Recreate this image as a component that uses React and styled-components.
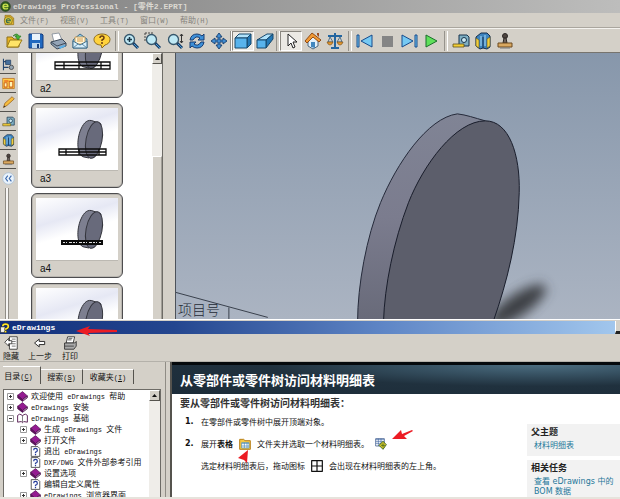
import React from "react";
import styled, { createGlobalStyle, css } from "styled-components";

const face = "#d4d0c8";
const cjk = `"Noto Sans CJK SC", sans-serif`;

const Global = createGlobalStyle`
  * { box-sizing: border-box; }
  body { margin: 0; background: ${face}; }
  button { font: inherit; color: inherit; background: none; border: 0; padding: 0; margin: 0; }
  ul, ol, h1, h2, h3, p { margin: 0; padding: 0; }
  ul, ol { list-style: none; }
  svg { display: block; flex: none; }
`;

const Desktop = styled.div`
  display: grid;
  grid-template-rows: auto auto auto minmax(0, 266fr) minmax(0, 180fr);
  height: 100vh;
  overflow: hidden;
  background: ${face};
  font: 8px/12px ${cjk};
  color: #111;
`;

const Latin = styled.span`
  font-family: "Liberation Mono", monospace;
  font-size: ${(p) => (p.$bold ? 8 : 7)}px;
  font-weight: ${(p) => (p.$bold ? 700 : 400)};
  white-space: pre;
`;

const TitleBar = styled.header`
  display: flex;
  align-items: center;
  gap: 2px;
  height: 13px;
  overflow: hidden;
  white-space: nowrap;
  font-weight: 700;
  color: ${(p) => (p.$active ? "#fff" : "#dcd9d2")};
  background: ${(p) =>
    p.$active
      ? "linear-gradient(90deg, #12307c 0%, #24468f 28%, #5f86c6 62%, #a3c8ee 100%)"
      : "linear-gradient(90deg, #818181, #bdbdbc)"};
`;

const TitleEnd = styled.button`
  margin-left: auto;
  align-self: stretch;
  width: 5px;
  background: ${face};
  border-left: 1px solid #fff;
  border-bottom: 3px solid #222;
`;

const MenuBar = styled.nav`
  display: flex;
  align-items: center;
  height: 15px;
  padding-left: 3px;
  color: #85827c;
  border-bottom: 1px solid #aaa69e;
`;

const MenuButton = styled.button`
  width: 40px;
  text-align: left;
  white-space: nowrap;
`;

const MenuIcon = styled.span`
  width: 17px;
`;

const ToolBar = styled.div`
  display: flex;
  align-items: stretch;
  height: 25px;
  padding: 2px 0 1px 3px;
  border-top: 1px solid #f4f2ee;
  border-bottom: 1px solid #77746e;
`;

const ToolButton = styled.button`
  display: grid;
  place-items: center;
  width: 22px;
  ${(p) =>
    p.$on &&
    css`
      background: #ebe9e4;
      border: 1px solid;
      border-color: #8a8780 #fff #fff #8a8780;
    `}
`;

const Separator = styled.span`
  width: ${(p) => p.$w}px;
  display: flex;
  justify-content: center;
  &::before {
    content: "";
    width: 2px;
    border-left: 1px solid #96938c;
    border-right: 1px solid #fff;
  }
`;

const Workspace = styled.main`
  display: grid;
  grid-template-columns: 18px 134px 11px 12px minmax(0, 1fr);
  min-height: 0;
  overflow: hidden;
`;

const Rail = styled.div`
  display: flex;
  flex-direction: column;
  padding-top: 2px;
`;

const RailButton = styled.button`
  display: grid;
  place-items: center;
  width: 16px;
  height: 19px;
  flex: none;
  border-bottom: 1px solid ${(p) => (p.$plain ? "transparent" : "#55534e")};
`;

const RailGrip = styled.span`
  flex: 1;
  width: 4px;
  margin-left: 5px;
  border: 1px solid #8f8c85;
  border-width: 0 1px;
  background: #f7f6f4;
`;

const Previews = styled.div`
  background: #fff;
  overflow: hidden;
  padding-left: 13px;
`;

const PreviewList = styled.ul`
  display: grid;
  gap: 5px;
  margin-top: -40px;
`;

const Card = styled.li`
  width: 92px;
  height: 85px;
  padding: 4px;
  border: 1px solid #4d4d4f;
  border-radius: 6px;
  background: ${face};
  box-shadow: inset 0 0 0 1px #b9b6b0;
  svg { width: 100%; height: 62px; }
`;

const CardName = styled.div`
  padding: 1px 0 0 4px;
  font: 10px/13px "Liberation Sans", sans-serif;
  border-top: 1px solid #bcb9b2;
`;

const Scroll = styled.div`
  display: flex;
  flex-direction: column;
  background: #efede9;
  border-right: ${(p) => (p.$line ? "1px solid #6d6b66" : "0")};
`;

const ScrollButton = styled.button`
  display: grid;
  place-items: center;
  height: 11px;
  background: ${face};
  border: 1px solid;
  border-color: #fff #55534e #55534e #fff;
`;

const ScrollTrack = styled.div`
  flex: 92;
`;

const ScrollThumb = styled.div`
  flex: 163;
  background: ${face};
  border: 1px solid #fff;
  border-bottom: 0;
  border-right-color: #a19e97;
`;

const Viewport = styled.section`
  min-width: 0;
  overflow: hidden;
  border-left: 1px solid #4d525a;
  background: linear-gradient(#8797ab, #abb4c2);
  svg { width: 100%; height: 100%; overflow: visible; }
`;

const Help = styled.section`
  display: grid;
  grid-template-rows: auto auto minmax(0, 1fr);
  position: relative;
  min-height: 0;
  padding-top: 1px;
  border-top: 1px solid #fff;
  border-bottom: 2px solid #e6e3dc;
`;

const HelpTools = styled.div`
  display: flex;
  height: 28px;
  padding-top: 2px;
  border-bottom: 1px solid #b4b1aa;
`;

const HelpTool = styled.button`
  display: flex;
  flex-direction: column;
  align-items: center;
  width: ${(p) => p.$w}px;
  line-height: 11px;
  white-space: nowrap;
`;

const HelpBody = styled.div`
  display: grid;
  grid-template-columns: 165px 7px minmax(0, 1fr);
  min-height: 0;
`;

const Splitter = styled.div`
  border-left: 1px solid #8f8c85;
  border-right: 2px solid #55534e;
`;

const Navigator = styled.div`
  display: flex;
  flex-direction: column;
  min-height: 0;
  padding: 4px 4px 0 3px;
`;

const Tabs = styled.div`
  display: flex;
  align-items: flex-end;
  height: 18px;
  margin-bottom: 5px;
`;

const Tab = styled.button`
  height: ${(p) => (p.$on ? 18 : 15)}px;
  width: ${(p) => p.$w}px;
  padding: ${(p) => (p.$on ? "1px 6px 0 0" : "0")};
  line-height: 14px;
  white-space: nowrap;
  border-right: 1px solid #55534e;
  border-top: 1px solid #fff;
`;

const TreeFrame = styled.div`
  display: grid;
  grid-template-columns: minmax(0, 1fr) 11px;
  flex: 1;
  min-height: 0;
  border: 1px solid #6d6b66;
  border-bottom: 0;
  background: #fff;
`;

const Tree = styled.ul`
  overflow: hidden;
  padding: 1px 0 0 3px;
`;

const Node = styled.li`
  display: flex;
  align-items: center;
  gap: 3px;
  height: 11px;
  line-height: 11px;
  padding-left: ${(p) => p.$depth * 13}px;
  white-space: nowrap;
`;

const Toggle = styled.button`
  display: grid;
  place-items: center;
  width: 7px;
  height: 7px;
`;

const Topic = styled.article`
  display: flex;
  flex-direction: column;
  min-height: 0;
  background: #fff;
  overflow: hidden;
`;

const TopicHead = styled.h1`
  flex: none;
  height: 32px;
  padding-left: 8px;
  border-top: 3px solid #05090c;
  font-size: 13px;
  line-height: 29px;
  font-weight: 700;
  color: #fff;
  background: radial-gradient(ellipse at 82% 0%, #4b6d80 0%, #385364 22%, #20313e 52%, #1c2c39 100%);
`;

const TopicColumns = styled.div`
  display: grid;
  grid-template-columns: minmax(0, 1fr) 93px;
  min-height: 0;
  flex: 1;
`;

const TopicText = styled.div`
  padding: 1px 0 0 8px;
  white-space: nowrap;
`;

const Lead = styled.h2`
  font-size: 10px;
  line-height: 15px;
  font-weight: 700;
  color: #333;
`;

const Steps = styled.ol`
  display: grid;
  gap: 6px;
  padding-top: 4px;
`;

const Step = styled.li`
  display: grid;
  grid-template-columns: 16px 1fr;
  padding-left: 5px;
  line-height: 16px;
`;

const StepNumber = styled.b`
  font-family: "DejaVu Sans", sans-serif;
  font-size: 8px;
`;

const Line = styled.p`
  display: flex;
  align-items: center;
  gap: 6px;
  height: 16px;
  & + & { margin-top: 6px; }
`;

const Aside = styled.aside`
  display: flex;
  flex-direction: column;
  gap: 4px;
  padding-top: 30px;
  min-height: 0;
  overflow: hidden;
`;

const Related = styled.section`
  flex: ${(p) => (p.$fill ? 1 : "none")};
  padding: 1px 2px 5px 4px;
  min-height: 0;
  background: #f2f2f2;
  h3 { font-size: 9px; line-height: 13px; font-weight: 700; color: #222; }
`;

const RelatedLink = styled.a`
  display: block;
  padding: 3px 0 0 3px;
  font: 8px/10px "DejaVu Sans", ${cjk};
  color: #25789a;
  text-decoration: none;
`;

const Pointer = styled.svg`
  position: absolute;
  left: ${(p) => p.$x}px;
  top: ${(p) => p.$y}px;
  fill: #ec1c24;
`;

const Icon = ({ size = 18, children }) => (
  <svg width={size} height={size} viewBox="0 0 18 18" fill="none" strokeLinejoin="round">
    {children}
  </svg>
);

const Lens = ({ children }) => (
  <Icon>
    <path d="M11 11l5 5" stroke="#173d68" strokeWidth="3" />
    <path d="M12 12l4 4" stroke="#4d9fd6" strokeWidth="1" />
    <circle cx="7.500" cy="7.500" r="5" fill="#bfe9f5" stroke="#36566b" strokeWidth="1.300" />
    {children}
  </Icon>
);

const icons = {
  open: (
    <Icon>
      <path d="M2 15V5h5l2 2h5v8z" fill="#e9b422" stroke="#8d701a" />
      <path d="M2 15l3-7h12l-4 7z" fill="#ffe467" stroke="#9b7b18" />
      <path d="M8 4q4-4 6 0h2l-3 4-3-4h2q-1-2-4 0z" fill="#45b535" stroke="#23711e" strokeWidth=".6" />
    </Icon>
  ),
  save: (
    <Icon>
      <path d="M2 2h13l1 1v13H2z" fill="#2169c0" stroke="#163c7b" />
      <path d="M5 2h8v6H5z" fill="#e9f3fb" />
      <path d="M5 11h8v5H5z" fill="#bdd6ed" />
      <path d="M10 12h2v4h-2z" fill="#173f7e" />
    </Icon>
  ),
  print: (
    <Icon>
      <path d="M3 2l7-1 3 7-8 2z" fill="#fff" stroke="#7c8793" strokeWidth=".8" />
      <path d="M2 10l11-3 4 4v3l-9 3-6-5z" fill="#94a4b6" stroke="#3d4a59" />
      <path d="M2 10l6 4 9-3" stroke="#3d4a59" />
      <path d="M10 15l5-2 2 1-6 3z" fill="#5bb0e8" />
    </Icon>
  ),
  mail: (
    <Icon>
      <path d="M2 8l7-6 7 5v9H2z" fill="#89c6e8" stroke="#43708c" />
      <path d="M4 5h10v7H4z" fill="#fff6d8" stroke="#c6913c" strokeWidth=".8" />
      <path d="M6 7h6M6 9h6" stroke="#d49949" />
      <path d="M2 9l7 4 7-4v7H2z" fill="#d5eefb" stroke="#43708c" />
      <path d="M2 16l5-4M16 16l-5-4" stroke="#43708c" strokeWidth=".8" />
    </Icon>
  ),
  help: (
    <Icon>
      <path d="M9 2c4 0 8 2 8 5.500s-3 5-5 5.500l-3 3-1-3C4 13 1 11 1 7.500S5 2 9 2z" fill="#ffd23c" stroke="#8c6a1c" />
      <path d="M7 6q0-2 2-2t2 2q0 1-2 2v1M9 10v2" stroke="#6b3d10" strokeWidth="1.500" />
    </Icon>
  ),
  fit: (
    <Lens>
      <path d="M7.500 5v5M5 7.500h5" stroke="#1d3646" strokeWidth="1.500" />
    </Lens>
  ),
  area: (
    <Lens>
      <path d="M1 1h8M1 1v8" stroke="#444" strokeDasharray="2 1" />
    </Lens>
  ),
  zoom: (
    <Lens>
      <path d="M15.500 2v9M14 4l1.500-2L17 4M14 9l1.500 2L17 9" stroke="#333" />
    </Lens>
  ),
  rotate: (
    <Icon>
      <path d="M2 8q1-6 7-6 3 0 5 2l2-2v6h-6l2-2q-4-3-7 2z" fill="#3d8fd8" stroke="#173d72" />
      <path d="M16 10q-1 6-7 6-3 0-5-2l-2 2v-6h6l-2 2q4 3 7-2z" fill="#3d8fd8" stroke="#173d72" />
    </Icon>
  ),
  pan: (
    <Icon>
      <path d="M9 1l3 4h-2v3h3V6l4 3-4 3v-2h-3v3h2l-3 4-3-4h2v-3H5v2L1 9l4-3v2h3V5H6z" fill="#3f8bd0" stroke="#18406f" strokeWidth=".9" />
    </Icon>
  ),
  cube: (
    <Icon>
      <path d="M1 6l4-4h12l-4 4z" fill="#b1e3fb" stroke="#17486d" />
      <path d="M13 6l4-4v10l-4 4z" fill="#2479b6" stroke="#17486d" />
      <path d="M1 6h12v10H1z" fill="#58b3ec" stroke="#17486d" />
    </Icon>
  ),
  perspective: (
    <Icon>
      <path d="M1 8l10-6h6l-7 6z" fill="#b1e3fb" stroke="#17486d" />
      <path d="M10 8l7-6v5l-7 9z" fill="#2479b6" stroke="#17486d" />
      <path d="M1 8h9v8H1z" fill="#58b3ec" stroke="#17486d" />
    </Icon>
  ),
  select: (
    <Icon>
      <path d="M6 2v12l3-3 2 5 2-1-2-5h4z" fill="#fff" stroke="#222" />
    </Icon>
  ),
  home: (
    <Icon>
      <path d="M4 9l5-5 5 4v6l-5 3-5-3z" fill="#e3f0fa" stroke="#4f6880" />
      <path d="M1 9l7-8 9 7-2 2-6-5-6 6z" fill="#f19a35" stroke="#914b16" />
      <path d="M7 10h4v6l-4-1z" fill="#4187bf" />
      <path d="M13 1h2v4l-2-2z" fill="#9c4c22" />
    </Icon>
  ),
  scales: (
    <Icon>
      <path d="M9 1v14M2 4h14M5 16h8" stroke="#2466a0" strokeWidth="2" />
      <path d="M4 5l-2 5h5zM14 5l-3 5h5z" stroke="#315a7c" strokeWidth=".8" />
      <path d="M1 10h6q-1 3-3 3t-3-3zM11 10h6q-1 3-3 3t-3-3z" fill="#e69a2e" stroke="#80511a" strokeWidth=".7" />
    </Icon>
  ),
  prev: (
    <Icon>
      <path d="M1 3h2v12H1zM16 3v12L5 9z" fill="#76c9f3" stroke="#174b8c" />
    </Icon>
  ),
  stop: (
    <Icon>
      <path d="M4 4h11v11H4z" fill="#858585" />
    </Icon>
  ),
  next: (
    <Icon>
      <path d="M15 3h2v12h-2zM2 3v12l11-6z" fill="#76c9f3" stroke="#174b8c" />
    </Icon>
  ),
  play: (
    <Icon>
      <path d="M4 3v12l11-6z" fill="#5fe05a" stroke="#1b6e2c" />
    </Icon>
  ),
  measure: (
    <Icon>
      <path d="M7 3h8l2 2v9H7z" fill="#7fb0c4" stroke="#17334c" />
      <circle cx="12" cy="8" r="2.500" fill="#cdeaf2" stroke="#17334c" />
      <path d="M1 12h11v3H1z" fill="#f3ce35" stroke="#5e501d" strokeWidth=".8" />
    </Icon>
  ),
  section: (
    <Icon>
      <path d="M2 5l5-4h6l3 3v11l-3 2-4-1-3 1-4-3z" fill="#3c83be" stroke="#142e4d" />
      <path d="M2 6l3 2v8l-3-2zM13 7l3-2v9l-3 2z" fill="#f1cf3e" stroke="#5e501d" strokeWidth=".6" />
      <path d="M7 4v10M11 3v11" stroke="#a9dbf7" />
      <path d="M9 5v11" stroke="#142e4d" />
    </Icon>
  ),
  stamp: (
    <Icon>
      <circle cx="9" cy="4" r="2.500" fill="#4e4540" stroke="#2c2724" />
      <path d="M8 6h2l1 5H7z" fill="#6d635d" stroke="#2c2724" />
      <path d="M2 11h14v4H2z" fill="#d9a860" stroke="#6d4b20" />
      <path d="M4 16h10" stroke="#777" />
    </Icon>
  ),
  tree: (
    <Icon>
      <path d="M2 1v16M2 5h5M2 13h7" stroke="#23466f" strokeWidth="1.500" />
      <path d="M5 3h7v6H5z" fill="#456f9c" stroke="#223d60" />
      <circle cx="13" cy="13" r="3" fill="#94a4b2" stroke="#333" />
    </Icon>
  ),
  views: (
    <Icon>
      <path d="M1 2h16v14H1z" fill="#ffd34d" stroke="#b76717" />
      <path d="M3 8h4v6H3zM10 6h5v8h-5z" fill="#fff5b5" stroke="#d1661f" strokeWidth="1.500" />
      <path d="M3 4h6v3H3z" fill="#f0852b" />
    </Icon>
  ),
  pencil: (
    <Icon>
      <path d="M2 16l2-6L14 1l3 3-10 9z" fill="#f8bd3d" stroke="#925c1c" />
      <path d="M2 16l1-3 2 2z" fill="#333" />
    </Icon>
  ),
  collapse: (
    <Icon>
      <circle cx="9" cy="9" r="8" fill="#eaf3fb" stroke="#a4bdd5" />
      <path d="M8 5L5 9l3 4M13 5l-3 4 3 4" stroke="#3b69ad" strokeWidth="1.600" />
    </Icon>
  ),
  app: (
    <Icon>
      <circle cx="9" cy="9" r="8" fill="#2f5a20" stroke="#233f18" />
      <path d="M5 9h8q0-4-4-4T5 9t4 4q2 0 4-1" stroke="#c6e04a" strokeWidth="2.200" />
    </Icon>
  ),
  doc: (
    <Icon>
      <path d="M3 2h8l5 4v10H3z" fill="#e6b730" stroke="#8b6a18" />
      <circle cx="8" cy="10" r="6" fill="#dfc63b" stroke="#776317" />
      <path d="M5 10h6q0-3-3-3t-3 3 3 3h2" stroke="#336a50" strokeWidth="1.600" />
    </Icon>
  ),
  helpApp: (
    <Icon>
      <path d="M1 7h8v10H1z" fill="#f4f2e8" stroke="#222" />
      <path d="M5 6q0-4 5-4t5 4-5 5v1M10 14v3" stroke="#222" strokeWidth="4.500" />
      <path d="M5 6q0-4 5-4t5 4-5 5v1M10 14v3" stroke="#ffe52a" strokeWidth="3" />
    </Icon>
  ),
  hide: (
    <Icon>
      <path d="M7 1h10v16H7z" fill="#fff" stroke="#222" />
      <path d="M10 4h5M10 7h5M10 10h5M10 13h5" stroke="#555" />
      <path d="M10 6v4H6v3L1 8l5-5v3z" fill="#fff" stroke="#222" />
    </Icon>
  ),
  back: (
    <Icon>
      <path d="M2 9l6-5v3h7v4H8v3z" fill="#fff" stroke="#222" strokeWidth="1.200" />
    </Icon>
  ),
  printer: (
    <Icon>
      <path d="M6 1h9l-2 8H4z" fill="#fff" stroke="#222" />
      <path d="M2 9h13l2-2v6l-3 4H2z" fill="#aaa" stroke="#222" />
      <path d="M2 13h12M7 3h5M6 5h5" stroke="#333" />
    </Icon>
  ),
  book: (
    <Icon>
      <path d="M1 7l8-6 8 7-8 6z" fill="#941b91" stroke="#4c084d" />
      <path d="M1 7v4l8 6 8-6V8l-8 6z" fill="#641063" stroke="#3c083d" />
      <path d="M10 15l6-5" stroke="#eee" />
    </Icon>
  ),
  openBook: (
    <Icon>
      <path d="M1 4l3-2q4 0 5 3 1-3 5-3l3 2v11l-6-1-2 2-2-2-6 1z" fill="#fff" stroke="#54194f" strokeWidth="1.500" />
      <path d="M9 5v10" stroke="#333" />
    </Icon>
  ),
  page: (
    <Icon>
      <path d="M2 1h11l3 3v13H2z" fill="#fff" stroke="#333" strokeWidth="1.300" />
      <path d="M6 7q0-3 3-3t3 3-3 3v2M9 13v2" stroke="#223a9a" strokeWidth="2" />
    </Icon>
  ),
  folder: (
    <Icon>
      <path d="M1 2h6l2 2h8v13H1z" fill="#f5c944" stroke="#b8811c" strokeWidth="1.500" />
      <path d="M4 7h11v8H4z" fill="#fff" stroke="#4486b5" />
      <path d="M4 8h11M8 7v8M12 7v8M4 12h11" stroke="#4486b5" />
    </Icon>
  ),
  bom: (
    <Icon>
      <path d="M1 1h13v11H1z" fill="#fff" stroke="#23447c" />
      <path d="M1 2h13M1 5h13M1 8h13M5 1v11M9 1v11" stroke="#3e66a3" />
      <path d="M12 5l5 5-5 7-6-6z" fill="#d6c52a" stroke="#2f5a19" strokeWidth="1.300" />
      <path d="M12 8v6M9 11h6" stroke="#2f5a19" />
    </Icon>
  ),
  move: (
    <Icon>
      <path d="M1 1h16v16H1zM9 1v16M1 9h16" fill="#fff" stroke="#111" strokeWidth="1.800" />
    </Icon>
  ),
};

const ArrowUp = () => (
  <svg width="5" height="3" viewBox="0 0 5 3">
    <path d="M0 3h5L2.500 0z" fill="#111" />
  </svg>
);

const MiniDisc = ({ table }) => (
  <svg viewBox="0 0 82 62" preserveAspectRatio="none">
    <defs>
      <linearGradient id="sky" x1="0" y1="0" x2=".4" y2="1">
        <stop offset="0" stopColor="#fff" />
        <stop offset=".4" stopColor="#e6e8f4" />
        <stop offset=".65" stopColor="#fff" />
      </linearGradient>
    </defs>
    <path d="M0 0h82v62H0z" fill="url(#sky)" />
    <g transform="translate(-35 -108)" stroke="#33343c" strokeWidth="1">
      <path d="M83 157c-7-1-8-17-3-28 3-7 7-10 12-8l8 3-12 34z" fill="#7d7f90" />
      <ellipse cx="93" cy="140" rx="8" ry="18.500" transform="rotate(11 93 140)" fill="#686a7b" />
    </g>
    {table === "solid" ? (
      <g>
        <path d="M25 42h42v5H25z" fill="#0b0b0b" />
        <path d="M27 44.500h38" stroke="#ddd" strokeDasharray="2 1 1 2 3 1" />
      </g>
    ) : (
      <g fill="none" stroke="#0b0b0b" strokeWidth="1.300">
        <path d={table === "wide" ? "M19 44h55v7H19zM19 47.500h55M28 44v7M43 44v7M65 44v7" : "M23 41h47v6H23zM23 44h47M30 41v6M43 41v6M63 41v6"} />
      </g>
    )}
  </svg>
);

const cards = [
  { name: "a2", table: "wide" },
  { name: "a3", table: "grid" },
  { name: "a4", table: "solid" },
  { name: "a5", table: "grid" },
];

const toolGroups = [
  { names: ["open", "save", "print", "mail", "help"], gap: 7 },
  { names: ["fit", "area", "zoom", "rotate", "pan"], gap: 2 },
  { names: ["cube", "perspective"], gap: 4 },
  { names: ["select", "home", "scales"], gap: 8 },
  { names: ["prev", "stop", "next", "play"], gap: 8 },
  { names: ["measure", "section", "stamp"], gap: 0 },
];

const menus = [["文件", "F"], ["视图", "V"], ["工具", "T"], ["窗口", "W"], ["帮助", "H"]];

const nodes = [
  { depth: 0, sign: "+", icon: "book", text: ["欢迎使用", " eDrawings ", "帮助"] },
  { depth: 0, sign: "+", icon: "book", text: ["", "eDrawings ", "安装"] },
  { depth: 0, sign: "-", icon: "openBook", text: ["", "eDrawings ", "基础"] },
  { depth: 1, sign: "+", icon: "book", text: ["生成", " eDrawings ", "文件"] },
  { depth: 1, sign: "+", icon: "book", text: ["打开文件", "", ""] },
  { depth: 1, icon: "page", text: ["退出", " eDrawings", ""] },
  { depth: 1, icon: "page", text: ["", "DXF/DWG ", "文件外部参考引用"] },
  { depth: 1, sign: "+", icon: "book", text: ["设置选项", "", ""] },
  { depth: 1, icon: "page", text: ["编辑自定义属性", "", ""] },
  { depth: 1, sign: "+", icon: "book", text: ["", "eDrawings ", "浏览器界面"] },
];

function Model() {
  return (
    <svg viewBox="175 53 445 265" preserveAspectRatio="xMinYMin meet">
      <defs>
        <linearGradient id="rim" x1="0" y1="0" x2="0" y2="1">
          <stop offset="0" stopColor="#808495" />
          <stop offset=".5" stopColor="#7b7c8e" />
          <stop offset="1" stopColor="#686a79" />
        </linearGradient>
        <filter id="soft" x="-50%" y="-50%" width="200%" height="200%">
          <feGaussianBlur stdDeviation="6" />
        </filter>
      </defs>
      <ellipse cx="517" cy="306" rx="34" ry="11" transform="rotate(-34 517 306)" fill="#3e3f45" filter="url(#soft)" />
      <path
        d="M357 322C357 286 366 237 380 203 396 164 427 118 457 114 466 115 474 118 485 121L384 322z"
        fill="url(#rim)" stroke="#252a3a"
      />
      <path
        d="M383 322C384 287 393 242 408 203 423 165 455 121 485 121 509 121 520 155 519 193 518 238 507 282 493 322z"
        fill="#5c5e6b" stroke="#191d2b"
      />
      <path d="M175 293l92 25M228 308v12" stroke="#39404c" fill="none" />
      <text x="177" y="316" fontSize="14" fontWeight="300" fill="#242a35" fontFamily="Noto Sans CJK SC, sans-serif">
        项目号
      </text>
    </svg>
  );
}

export default function App() {
  return (
    <Desktop>
      <Global />
      <TitleBar>
        <Icon size={11}>{icons.app.props.children}</Icon>
        <span>
          <Latin $bold>eDrawings Professional - [</Latin>零件<Latin $bold>2.EPRT]</Latin>
        </span>
      </TitleBar>
      <MenuBar>
        <MenuIcon>
          <Icon size={12}>{icons.doc.props.children}</Icon>
        </MenuIcon>
        {menus.map(([label, key]) => (
          <MenuButton key={key}>
            {label}
            <Latin>({key})</Latin>
          </MenuButton>
        ))}
      </MenuBar>
      <ToolBar role="toolbar">
        {toolGroups.map((group) => (
          <React.Fragment key={group.names[0]}>
            {group.names.map((name) => (
              <ToolButton key={name} aria-label={name} $on={name === "cube" || name === "select"}>
                {icons[name]}
              </ToolButton>
            ))}
            {group.gap > 0 && <Separator $w={group.gap} />}
          </React.Fragment>
        ))}
      </ToolBar>
      <Workspace>
        <Rail>
          {["tree", "views", "pencil", "measure", "section", "stamp", "collapse"].map((name) => (
            <RailButton key={name} aria-label={name} $plain={name === "collapse"}>
              <Icon size={13}>{icons[name].props.children}</Icon>
            </RailButton>
          ))}
          <RailGrip />
        </Rail>
        <Previews>
          <PreviewList>
            {cards.map((card) => (
              <Card key={card.name}>
                <MiniDisc table={card.table} />
                <CardName>{card.name}</CardName>
              </Card>
            ))}
          </PreviewList>
        </Previews>
        <Scroll $line>
          <ScrollButton aria-label="up"><ArrowUp /></ScrollButton>
          <ScrollTrack />
          <ScrollThumb />
        </Scroll>
        <span />
        <Viewport>
          <Model />
        </Viewport>
      </Workspace>
      <Help>
        <TitleBar $active>
          <Icon size={10}>{icons.helpApp.props.children}</Icon>
          <Latin $bold>eDrawings</Latin>
          <TitleEnd aria-label="minimize" />
        </TitleBar>
        <HelpTools>
          <HelpTool $w={22}><Icon size={14}>{icons.hide.props.children}</Icon>隐藏</HelpTool>
          <HelpTool $w={36}><Icon size={14}>{icons.back.props.children}</Icon>上一步</HelpTool>
          <HelpTool $w={24}><Icon size={14}>{icons.printer.props.children}</Icon>打印</HelpTool>
        </HelpTools>
        <HelpBody>
          <Navigator>
            <Tabs role="tablist">
              <Tab role="tab" aria-selected="true" $on $w={38}>目录<Latin>(<u>C</u>)</Latin></Tab>
              <Tab role="tab" aria-selected="false" $w={42}>搜索<Latin>(<u>S</u>)</Latin></Tab>
              <Tab role="tab" aria-selected="false" $w={51}>收藏夹<Latin>(<u>I</u>)</Latin></Tab>
            </Tabs>
            <TreeFrame>
              <Tree>
                {nodes.map((node, i) => (
                  <Node key={i} $depth={node.depth}>
                    <Toggle aria-label="toggle">
                      {node.sign && (
                        <svg width="7" height="7" viewBox="0 0 7 7" fill="none" stroke="#333">
                          <path d="M.5.5h6v6h-6z" stroke="#999" />
                          <path d={node.sign === "+" ? "M2 3.500h3M3.500 2v3" : "M2 3.500h3"} />
                        </svg>
                      )}
                    </Toggle>
                    <Icon size={11}>{icons[node.icon].props.children}</Icon>
                    <span>
                      {node.text[0]}
                      <Latin>{node.text[1]}</Latin>
                      {node.text[2]}
                    </span>
                  </Node>
                ))}
              </Tree>
              <Scroll>
                <ScrollButton aria-label="up"><ArrowUp /></ScrollButton>
              </Scroll>
            </TreeFrame>
          </Navigator>
          <Splitter />
          <Topic>
            <TopicHead>从零部件或零件树访问材料明细表</TopicHead>
            <TopicColumns>
              <TopicText>
                <Lead>要从零部件或零件树访问材料明细表：</Lead>
                <Steps>
                  <Step>
                    <StepNumber>1.</StepNumber>
                    <Line>在零部件或零件树中展开顶端对象。</Line>
                  </Step>
                  <Step>
                    <StepNumber>2.</StepNumber>
                    <div>
                      <Line>
                        <span>展开<b>表格</b></span>
                        <Icon size={12}>{icons.folder.props.children}</Icon>
                        <span>文件夹并选取一个材料明细表。</span>
                        <Icon size={12}>{icons.bom.props.children}</Icon>
                      </Line>
                      <Line>
                        <span>选定材料明细表后，拖动图标</span>
                        <Icon size={12}>{icons.move.props.children}</Icon>
                        <span>会出现在材料明细表的左上角。</span>
                      </Line>
                    </div>
                  </Step>
                </Steps>
              </TopicText>
              <Aside>
                <Related>
                  <h3>父主题</h3>
                  <RelatedLink href="#bom">材料明细表</RelatedLink>
                </Related>
                <Related $fill>
                  <h3>相关任务</h3>
                  <RelatedLink href="#data">查看 eDrawings 中的 BOM 数据</RelatedLink>
                </Related>
              </Aside>
            </TopicColumns>
          </Topic>
        </HelpBody>
        <Pointer $x={76} $y={6} width="42" height="10" viewBox="0 0 42 10">
          <path d="M0 5l14-5-2 3 29 1v2l-29 1 2 3z" />
        </Pointer>
        <Pointer $x={392} $y={109} width="21" height="13" viewBox="0 0 21 13">
          <path d="M0 10l9-9 1 4 10-4 1 1-9 5 3 3z" />
        </Pointer>
        <Pointer $x={238} $y={130} width="13" height="14" viewBox="0 0 13 14">
          <path d="M10 0l-1 13-3-3-6-2z" />
        </Pointer>
      </Help>
    </Desktop>
  );
}
